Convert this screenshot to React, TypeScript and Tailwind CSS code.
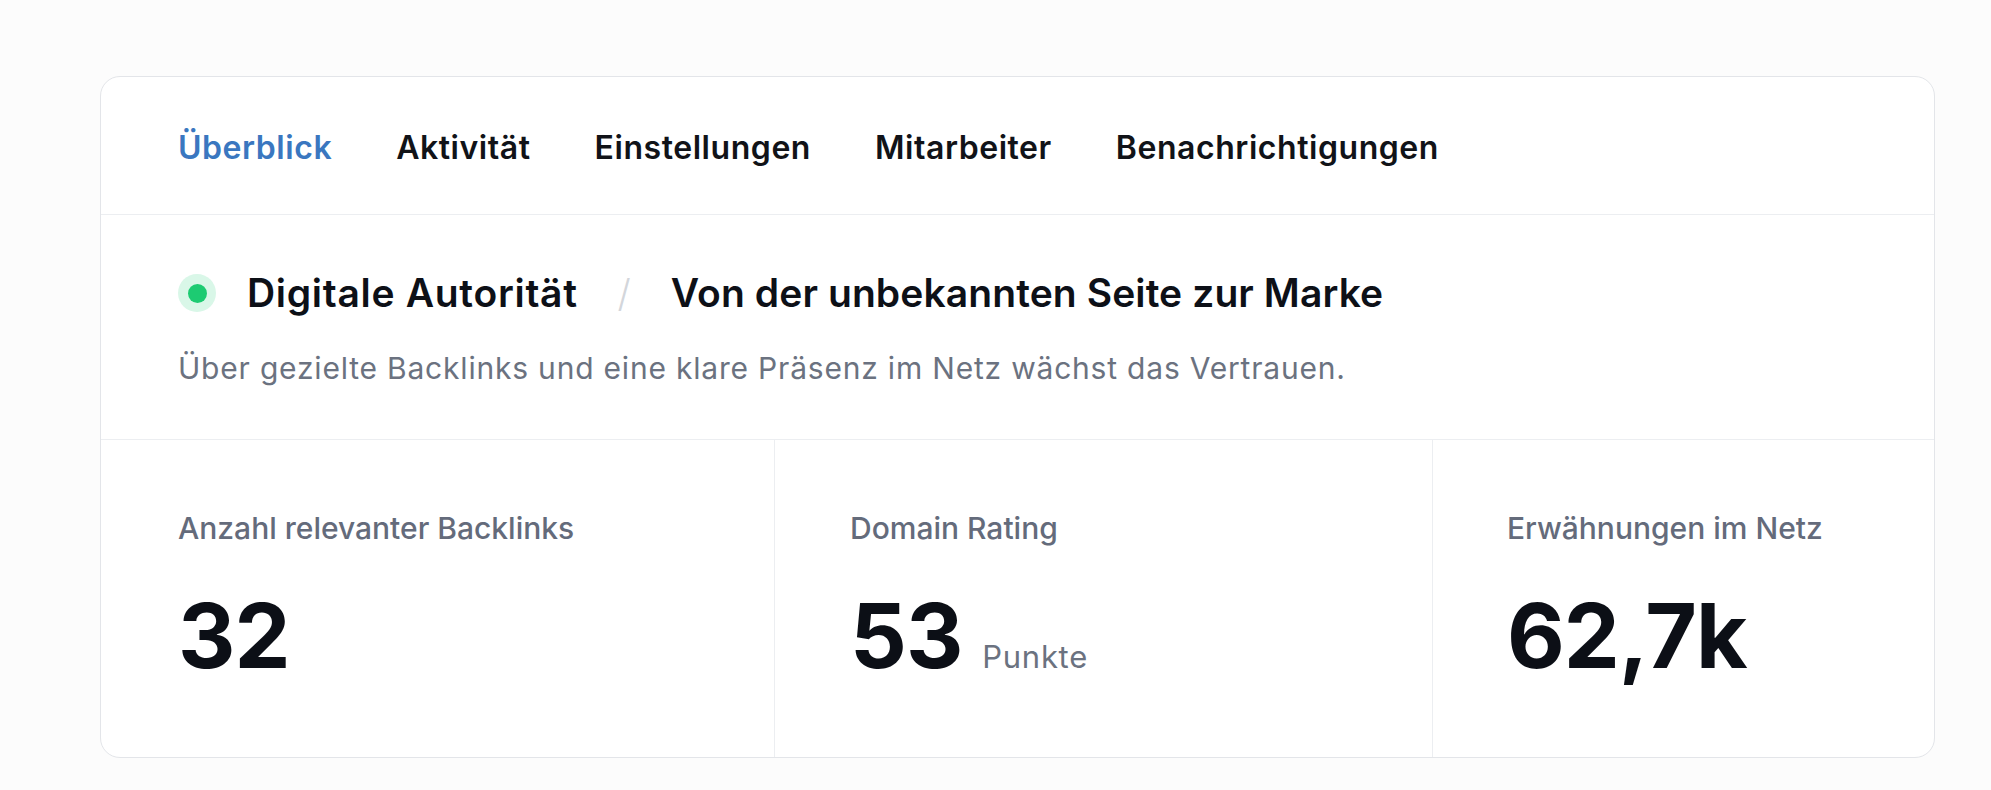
import React from "react";

const tabs = ["Überblick", "Aktivität", "Einstellungen", "Mitarbeiter", "Benachrichtigungen"];

const stats = [
  { label: "Anzahl relevanter Backlinks", value: "32", unit: "" },
  { label: "Domain Rating", value: "53", unit: "Punkte" },
  { label: "Erwähnungen im Netz", value: "62,7k", unit: "" },
];

export default function App() {
  return (
    <div className="min-h-[790px] w-full bg-[#fcfcfc] pt-[76px] font-['Inter',sans-serif]">
      <div className="ml-[100px] w-[1835px] overflow-hidden rounded-[20px] border border-[#e3e5e9] bg-white">
        <div className="flex gap-[64px] border-b border-[#eceef1] px-[77px] pt-[51px] pb-[46px]">
          {tabs.map((tab, i) => (
            <span
              key={tab}
              className={
                i === 0
                  ? "text-[32px] leading-[40px] font-semibold tracking-[0.55px] text-[#3a77c0]"
                  : "text-[32px] leading-[40px] font-semibold tracking-[0.55px] text-[#111318]"
              }
            >
              {tab}
            </span>
          ))}
        </div>

        <div className="border-b border-[#eceef1] px-[77px] pt-[54px] pb-[51px]">
          <div className="flex items-center">
            <span className="flex h-[38px] w-[38px] items-center justify-center rounded-full bg-[#d9f7e8]">
              <span className="h-[19px] w-[19px] rounded-full bg-[#1dcb72]" />
            </span>
            <span className="ml-[31px] text-[39px] leading-[48px] font-semibold tracking-[0.7px] text-[#0d1017]">
              Digitale Autorität
            </span>
            <span className="mx-[40px] text-[38px] leading-[48px] font-light text-[#d3d6db]">/</span>
            <span className="text-[39px] leading-[48px] font-semibold tracking-[0.1px] text-[#0d1017]">
              Von der unbekannten Seite zur Marke
            </span>
          </div>
          <p className="mt-[31px] text-[30px] leading-[40px] tracking-[0.8px] text-[#6b7280]">
            Über gezielte Backlinks und eine klare Präsenz im Netz wächst das Vertrauen.
          </p>
        </div>

        <div className="grid grid-cols-[674px_658px_1fr]">
          {stats.map((s, i) => (
            <div
              key={s.label}
              className={
                i < 2
                  ? "border-r border-[#eceef1] pt-[68px] pb-[77px] " + (i === 0 ? "pl-[77px]" : "pl-[75px]")
                  : "pt-[68px] pb-[77px] pl-[74px]"
              }
            >
              <div className="text-[30px] leading-[40px] font-medium text-[#646b7b]">{s.label}</div>
              <div className="mt-[43px] flex items-baseline">
                <span className="text-[89px] leading-[89px] font-bold tracking-[-1px] text-[#0c0f16]">
                  {s.value}
                </span>
                {s.unit && (
                  <span className="ml-[20px] text-[31px] leading-[40px] tracking-[0.7px] text-[#6b7280]">
                    {s.unit}
                  </span>
                )}
              </div>
            </div>
          ))}
        </div>
      </div>
    </div>
  );
}
